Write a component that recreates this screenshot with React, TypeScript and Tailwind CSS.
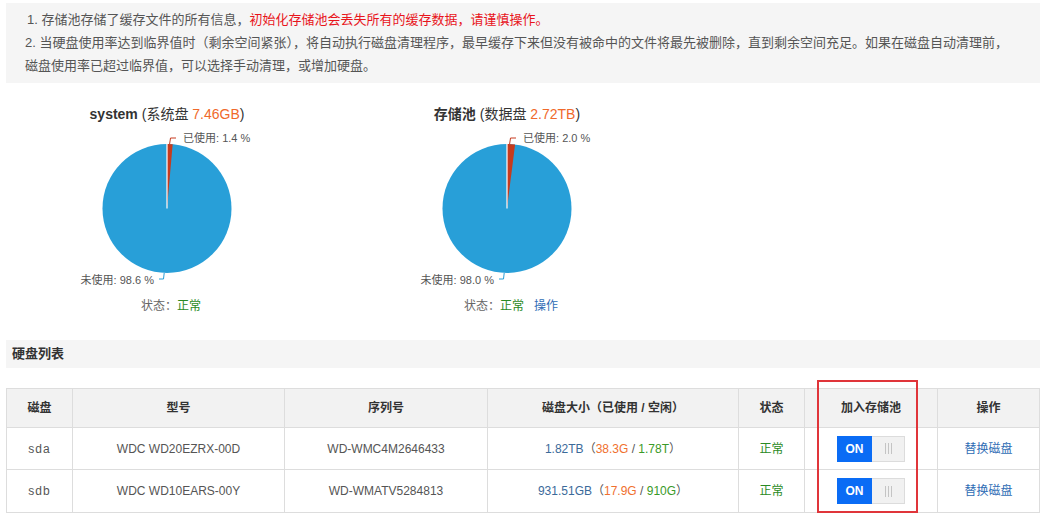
import React from 'react';

const FONT = '"Liberation Sans", "Noto Sans CJK SC", sans-serif';

type PieProps = {
  name: string;
  kind: string;
  total: string;
  used: number;
  showAction?: boolean;
};

function polar(cx: number, cy: number, r: number, deg: number) {
  const a = (deg * Math.PI) / 180;
  return [cx + r * Math.sin(a), cy - r * Math.cos(a)];
}

function DiskPie({ name, kind, total, used, showAction }: PieProps) {
  const cx = 167;
  const cy = 84.5;
  const r = 64.5;
  const angle = (used / 100) * 360;
  const [ex, ey] = polar(cx, cy, r, angle);
  const free = (100 - used).toFixed(1);

  return (
    <div className="flex w-[334px] flex-col items-center">
      <div className="h-[20px] text-[14px] leading-[20px] text-[#333]">
        <span className="font-bold">{name}</span> ({kind} <span className="text-[#f0692b]">{total}</span>)
      </div>
      <svg width="334" height="172" viewBox="0 0 334 172" style={{ fontFamily: FONT }}>
        <circle cx={cx} cy={cy} r={r} fill="#289fd8" />
        <path d={`M${cx} ${cy} L${cx} ${cy - r} A${r} ${r} 0 0 1 ${ex} ${ey} Z`} fill="#c63b1e" />
        <line x1={cx} y1={cy} x2={cx} y2={cy - r} stroke="#fff" strokeWidth="1.2" />
        <polyline
          points={`${cx + 2.6} ${cy - r} ${cx + 3.5} ${cy - 70.5} ${cx + 9} ${cy - 70.5}`}
          fill="none"
          stroke="#c63b1e"
          strokeWidth="1"
        />
        <text x={cx + 16} y={cy - 66.5} fontSize="11" fill="#555">
          已使用: {used.toFixed(1)} %
        </text>
        <polyline
          points={`${cx - 2.8} ${cy + r} ${cx - 3.5} ${cy + 70.5} ${cx - 8} ${cy + 70.5}`}
          fill="none"
          stroke="#289fd8"
          strokeWidth="1"
        />
        <text x={cx - 13} y={cy + 75.5} fontSize="11" fill="#555" textAnchor="end">
          未使用: {free} %
        </text>
      </svg>
      <div className="ml-[8px] mt-[1px] text-[12px] leading-[18px] text-[#666]">
        状态：<span className="text-[#2a8a24]">正常</span>
        {showAction && <span className="ml-[10px] text-[#2f6db5]">操作</span>}
      </div>
    </div>
  );
}

function Switch() {
  return (
    <div className="mx-auto flex h-[26px] w-[68px]">
      <div className="flex w-[35px] items-center justify-center bg-[#0a6cf5] text-[12px] font-bold text-white">ON</div>
      <div className="flex flex-1 items-center justify-center gap-[2px] border border-l-0 border-[#dcdcdc] bg-[#f1f1f1]">
        <span className="h-[11px] w-px bg-[#c4c4c4]" />
        <span className="h-[11px] w-px bg-[#c4c4c4]" />
        <span className="h-[11px] w-px bg-[#c4c4c4]" />
      </div>
    </div>
  );
}

const disks = [
  { dev: 'sda', model: 'WDC WD20EZRX-00D', sn: 'WD-WMC4M2646433', size: '1.82TB', used: '38.3G', free: '1.78T', h: 'h-[42px]' },
  { dev: 'sdb', model: 'WDC WD10EARS-00Y', sn: 'WD-WMATV5284813', size: '931.51GB', used: '17.9G', free: '910G', h: 'h-[43px]' },
];

export default function App() {
  return (
    <div className="h-[521px] w-[1043px] overflow-hidden bg-white" style={{ fontFamily: FONT }}>
      <div className="ml-[6px] mt-[3px] h-[80px] w-[1034px] bg-[#f5f5f5] px-[21px] pt-[5px] text-[13px] leading-[23px] text-[#555]">
        <div>
          1. 存储池存储了缓存文件的所有信息，<span className="text-[#e8141b]">初始化存储池会丢失所有的缓存数据，请谨慎操作。</span>
        </div>
        <div className="-ml-[2px] whitespace-nowrap">
          2. 当硬盘使用率达到临界值时（剩余空间紧张），将自动执行磁盘清理程序，最早缓存下来但没有被命中的文件将最先被删除，直到剩余空间充足。如果在磁盘自动清理前，
        </div>
        <div className="-ml-[2px]">磁盘使用率已超过临界值，可以选择手动清理，或增加硬盘。</div>
      </div>

      <div className="mt-[21px] flex gap-[6px]">
        <DiskPie name="system" kind="系统盘" total="7.46GB" used={1.4} />
        <DiskPie name="存储池" kind="数据盘" total="2.72TB" used={2.0} showAction />
      </div>

      <div className="ml-[6px] mt-[25px] flex h-[28px] w-[1034px] items-center bg-[#f5f5f5] pl-[6px] text-[13px] font-bold text-[#333]">
        硬盘列表
      </div>

      <div className="relative ml-[6px] mt-[20px] w-[1033px]">
        <table className="w-full table-fixed border-collapse text-center text-[12px] text-[#555]">
          <colgroup>
            <col className="w-[66px]" />
            <col className="w-[212px]" />
            <col className="w-[203px]" />
            <col className="w-[251px]" />
            <col className="w-[66px]" />
            <col className="w-[133px]" />
            <col className="w-[102px]" />
          </colgroup>
          <thead>
            <tr className="h-[39px] bg-[#f2f2f2] font-bold text-[#333]">
              <th className="border border-[#dddddd]">磁盘</th>
              <th className="border border-[#dddddd]">型号</th>
              <th className="border border-[#dddddd]">序列号</th>
              <th className="border border-[#dddddd]">磁盘大小（已使用 / 空闲）</th>
              <th className="border border-[#dddddd]">状态</th>
              <th className="border border-[#dddddd]">加入存储池</th>
              <th className="border border-[#dddddd]">操作</th>
            </tr>
          </thead>
          <tbody>
            {disks.map((d) => (
              <tr key={d.dev} className={d.h}>
                <td className="border border-[#dddddd] tracking-[1px]">{d.dev}</td>
                <td className="border border-[#dddddd]">{d.model}</td>
                <td className="border border-[#dddddd]">{d.sn}</td>
                <td className="border border-[#dddddd]">
                  <span className="text-[#3b6a9a]">{d.size}</span>（<span className="text-[#f0702e]">{d.used}</span> /{' '}
                  <span className="text-[#3a9a28]">{d.free}</span>）
                </td>
                <td className="border border-[#dddddd] text-[#2a8a24]">正常</td>
                <td className="border border-[#dddddd]">
                  <Switch />
                </td>
                <td className="border border-[#dddddd] text-[#2f6db5]">替换磁盘</td>
              </tr>
            ))}
          </tbody>
        </table>
        <div className="pointer-events-none absolute left-[811px] top-[-8px] h-[133px] w-[101px] border-2 border-[#e0353a]" />
      </div>
    </div>
  );
}
